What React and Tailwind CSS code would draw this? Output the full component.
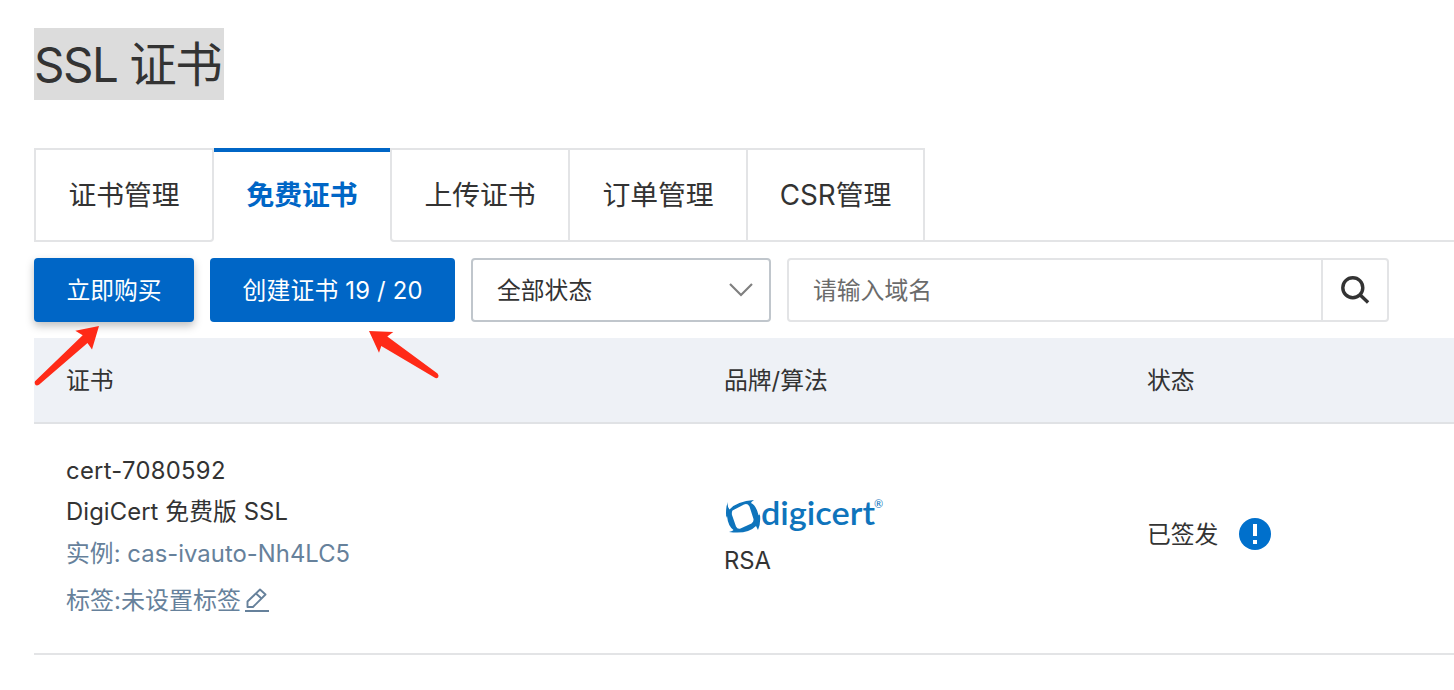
import React from 'react'

const tabs = [
  { label: '证书管理', width: 'w-[180px] border-l-2 rounded-br' },
  { label: '免费证书', active: true },
  { label: '上传证书', width: 'w-[180px] border-l-2 rounded-bl' },
  { label: '订单管理', width: 'w-[178px]' },
  { label: 'CSR管理', width: 'w-[177px]' },
]

const Tabs = () => {
  return (
    <div className="mt-12 flex h-[94px] text-[27.8px]">
      {tabs.map((tab) =>
        tab.active ? (
          <div
            key={tab.label}
            className="flex w-[176px] items-center justify-center border-t-4 border-[#0066c6] pb-0.5 font-bold text-[#0066c6]"
          >
            {tab.label}
          </div>
        ) : (
          <div
            key={tab.label}
            className={`${tab.width} flex items-center justify-center border-y-2 border-r-2 border-[#e3e4e6] pt-0.5`}
          >
            {tab.label}
          </div>
        )
      )}
      <div className="flex-1 border-b-2 border-[#e3e4e6]" />
    </div>
  )
}

const Toolbar = () => {
  return (
    <div className="mt-4 flex h-16 gap-4 text-[23.8px]">
      <button className="w-40 rounded bg-[#0066c6] pt-0.5 text-white shadow-[0_4px_8px_rgba(0,0,0,0.25)]">立即购买</button>
      <button className="w-[245px] rounded bg-[#0066c6] pt-0.5 tracking-[0.2px] whitespace-nowrap text-white">
        创建证书 19 / 20
      </button>
      <div className="flex w-[300px] items-center justify-between rounded border-2 border-[#c0c6cc] pr-4 pl-6">
        <span className="pt-0.5">全部状态</span>
        <svg className="h-6 w-6" viewBox="0 0 24 24" fill="none" stroke="#808080" strokeWidth="2.2">
          <path d="M1 6 12 17 23 6" />
        </svg>
      </div>
      <div className="flex w-[602px] rounded border-2 border-[#e3e4e6]">
        <div className="flex flex-1 items-center pt-0.5 pl-6 text-[#6b6b6b]">请输入域名</div>
        <div className="flex w-[66px] items-center justify-center border-l-2 border-[#e3e4e6]">
          <svg className="h-8 w-8" viewBox="0 0 32 32" fill="none" stroke="#333" strokeWidth="3.4">
            <circle cx="13.8" cy="13.7" r="10" />
            <path d="M20.7 20.6 29.1 28.4" />
          </svg>
        </div>
      </div>
    </div>
  )
}

const DigicertLogo = () => {
  return (
    <svg className="-mt-1 h-11 w-40 overflow-visible" viewBox="0 -4 160 44" fill="#0e74bc">
      <path
        fillRule="evenodd"
        d="M4 3 Q3 8 5.5 10.5 Q13 2 30 1 Q27 3 27 4 Q32 6 34.5 16 Q36 17 35.5 13 Q37.5 23 34 31 Q33 29 32 27 Q24 35.5 5 33 Q9 32 9.5 31 Q4 27 3 17 Q2 18 2.5 21 Q1 9 4 3Z M8.5 11.5 Q7.5 13 8 16 L12 27.5 Q13.5 30.5 16.5 29.5 L27.5 24.5 Q30 22.5 29.5 20 L25.5 7.5 Q23.5 4 20 5.5Z"
      />
      <text x="37" y="26" className="font-[Lato] text-[33px] font-semibold" textLength="114" lengthAdjust="spacingAndGlyphs">
        digicert
      </text>
      <text x="150" y="8.5" className="font-[Lato] text-[11px]">
        ®
      </text>
    </svg>
  )
}

const CertTable = () => {
  return (
    <div className="mt-4 text-[23.8px]">
      <div className="flex h-[86px] items-center border-b-2 border-[#e0e2e5] bg-[#eef1f6] pt-0.5 pl-8">
        <div className="w-[658px]">证书</div>
        <div className="w-[423px]">品牌/算法</div>
        <div>状态</div>
      </div>
      <div className="flex h-[231px] items-center border-b-2 border-[#e3e4e6] pb-2 pl-8">
        <div className="w-[658px] pt-px leading-[41px]">
          <div className="tracking-[0.3px]">cert-7080592</div>
          <div className="tracking-[0.1px]">DigiCert 免费版 SSL</div>
          <div className="pt-px tracking-[0.05px] text-[#66819b]">实例: cas-ivauto-Nh4LC5</div>
          <div className="mt-[6px] flex items-center text-[24px] text-[#66819b]">
            标签:未设置标签
            <svg className="ml-1 h-6 w-6" viewBox="0 0 24 24" fill="none" stroke="#66819b" strokeWidth="1.9">
              <path d="M2.5 19V13.5L15 1.5 20.5 6.5 8 19Z" strokeLinejoin="round" />
              <path d="M11 5.5 16.5 10.5M0 23H24" />
            </svg>
          </div>
        </div>
        <div className="w-[423px] pt-2">
          <DigicertLogo />
          <div className="mt-1">RSA</div>
        </div>
        <div className="flex items-center">
          已签发
          <svg className="-mt-0.5 ml-[21px] h-8 w-8" viewBox="0 0 32 32">
            <circle cx="16" cy="16" r="16" fill="#0070cc" />
            <path d="M14 6h4v12h-4zM14 22h4v4h-4z" fill="#fff" />
          </svg>
        </div>
      </div>
    </div>
  )
}

const Arrows = () => {
  return (
    <svg className="pointer-events-none absolute top-[320px] left-[30px]" width="420" height="72" viewBox="30 320 420 72" fill="#ff2a17">
      <path d="M99 326 75.3 330.7 82.7 335.2 35 381.2 Q33.8 383.5 35.5 385 Q37 386 39 384.7 L87.5 342.9 92 349.5Z" />
      <path d="M369 331 393.3 332 387.3 336.5 437.5 373.5 Q439.2 375.5 438.2 377.3 Q436.8 378.8 434.5 377.6 L381.3 346 379 352.7Z" />
    </svg>
  )
}

const App = () => {
  return (
    <div className="relative h-[690px] overflow-hidden bg-white pt-7 pl-[34px] font-['Inter','Noto_Sans_CJK_SC',sans-serif] font-[399] text-[#333]">
      <h1 className="flex h-[72px] w-[190px] items-center bg-[#dcdcdc] pt-0.5 text-[47.5px] font-[380] tracking-[-1.5px] whitespace-nowrap">
        SSL 证书
      </h1>
      <Tabs />
      <Toolbar />
      <CertTable />
      <Arrows />
    </div>
  )
}

export default App
